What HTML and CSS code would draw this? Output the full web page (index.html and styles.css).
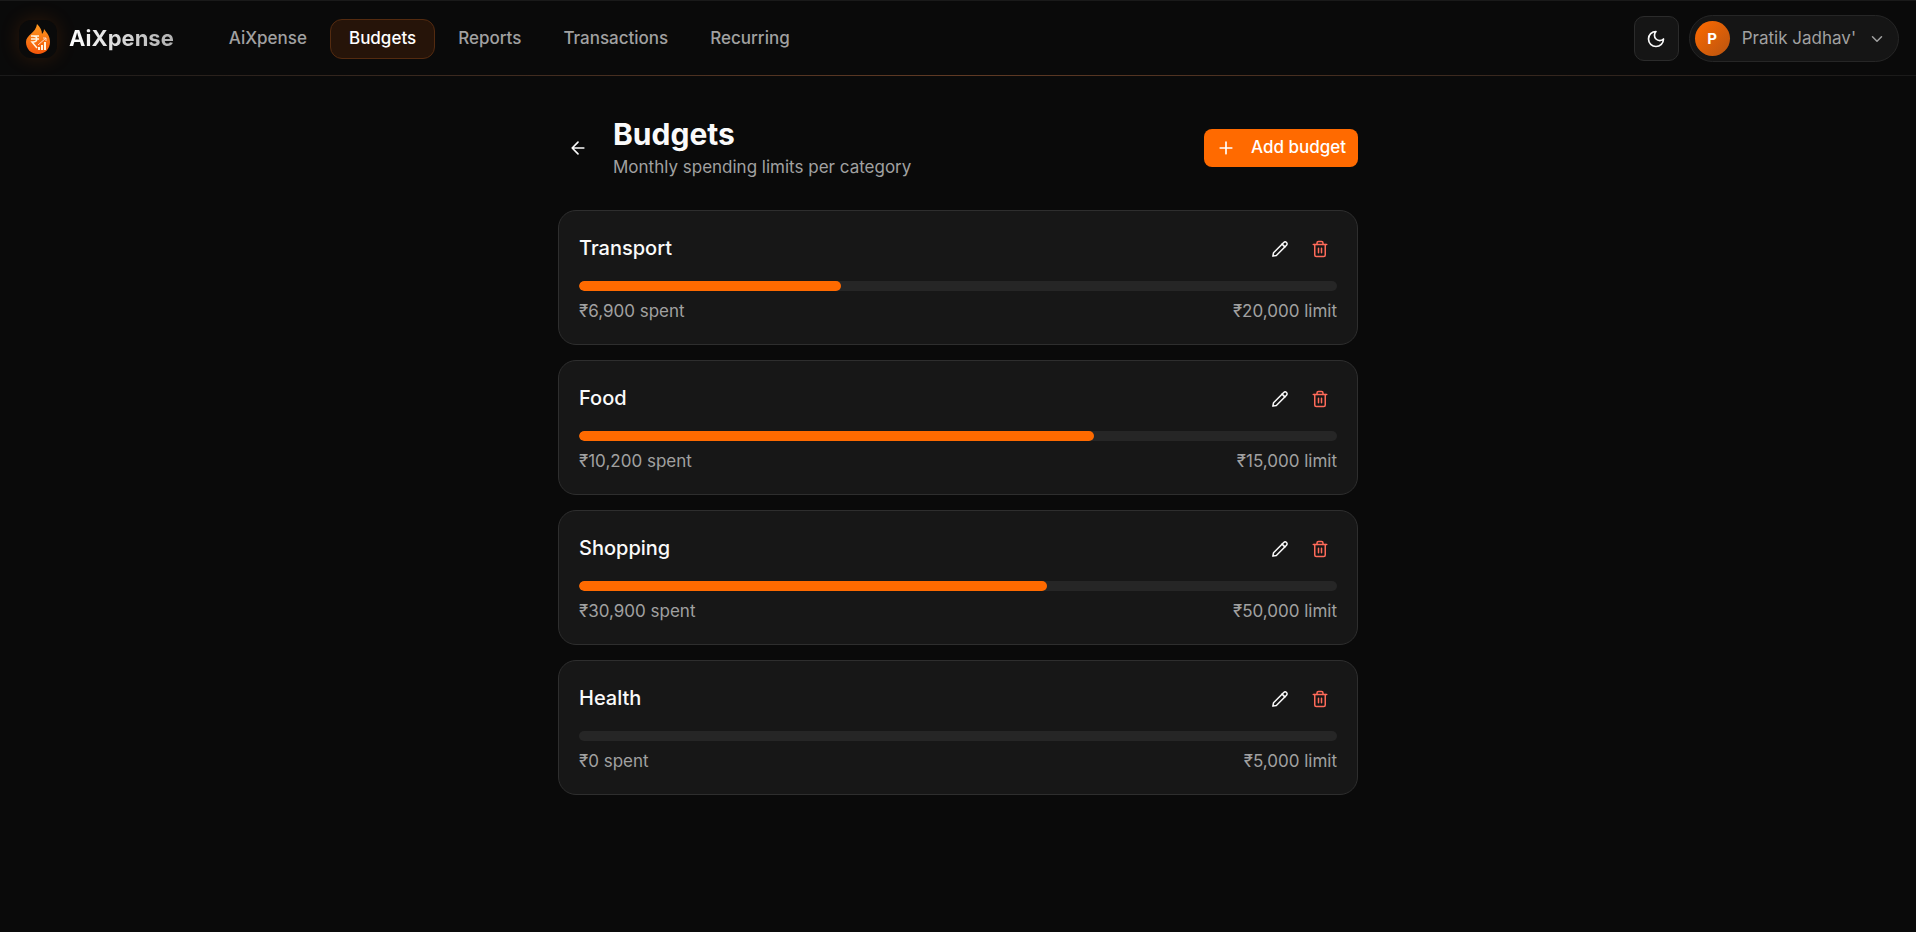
FILE: index.html
```html
<!DOCTYPE html>
<html lang="en">
<head>
    <meta charset="UTF-8">
    <meta name="viewport" content="width=device-width, initial-scale=1.0">
    <title>Budgets - AiXpense</title>
    <link rel="stylesheet" href="styles.css">
</head>
<body>
    <!-- Shared icons -->
    <svg class="sprite" aria-hidden="true">
        <symbol id="icon-pencil" viewBox="0 0 24 24">
            <path d="M2.5 21.5l.9-4.6L17 3.3a2.6 2.6 0 0 1 3.7 3.7L7.1 20.6z"/>
            <path d="m14.8 5.5 3.7 3.7"/>
        </symbol>
        <symbol id="icon-trash" viewBox="0 0 24 24">
            <path d="M3 6h18"/>
            <path d="M19 6v14a2 2 0 0 1-2 2H7a2 2 0 0 1-2-2V6"/>
            <path d="M8 6V4a2 2 0 0 1 2-2h4a2 2 0 0 1 2 2v2"/>
            <path d="M10 11v6M14 11v6"/>
        </symbol>
    </svg>

    <header class="topbar">
        <a class="brand" href="#">
            <span class="brand-logo">
                <svg viewBox="0 0 26 30" width="26" height="30" aria-hidden="true">
                    <defs>
                        <linearGradient id="flame" x1="0" y1="0" x2="0" y2="1">
                            <stop offset="0" stop-color="#ff9a1f"/>
                            <stop offset="1" stop-color="#f4560a"/>
                        </linearGradient>
                    </defs>
                    <path fill="url(#flame)" d="M12 0c3 3 5 6 5 10 1-1 2-3 2-5 3 4 6 7 6 13 0 7-5 12-12 12S1 25 1 18C1 11 11 9 12 0z"/>
                    <path fill="none" stroke="#fff3dd" stroke-width="1.5" d="M6 12h8M6 15h8M6 12h2c5 0 5 6 0 6H7l5 6"/>
                    <path fill="#fff3dd" d="M13 23h2v3h-2zM16 21h2v5h-2zM19 18h2v8h-2z"/>
                    <path fill="none" stroke="#ffd9c4" d="M13 21l8-7M18 14h3v3"/>
                </svg>
            </span>
            <span class="brand-name">AiXpense</span>
        </a>

        <nav class="nav">
            <a class="nav-link" href="#">AiXpense</a>
            <a class="nav-link active" href="#" aria-current="page">Budgets</a>
            <a class="nav-link" href="#">Reports</a>
            <a class="nav-link" href="#">Transactions</a>
            <a class="nav-link" href="#">Recurring</a>
        </nav>

        <div class="topbar-actions">
            <button class="theme-toggle" type="button" aria-label="Toggle theme">
                <svg class="icon icon-lg" viewBox="0 0 24 24"><path d="M12 3a6 6 0 0 0 9 9 9 9 0 1 1-9-9Z"/></svg>
            </button>
            <button class="user-menu" type="button">
                <span class="avatar">P</span>
                <span class="user-name">Pratik Jadhav'</span>
                <svg class="icon" viewBox="0 0 24 24"><path d="m6 9 6 6 6-6"/></svg>
            </button>
        </div>
    </header>

    <main class="page">
        <div class="page-header">
            <button class="icon-btn back-btn" type="button" aria-label="Back">
                <svg class="icon icon-lg" viewBox="0 0 24 24"><path d="m12 19-7-7 7-7M19 12H5"/></svg>
            </button>
            <div class="page-title">
                <h1>Budgets</h1>
                <p>Monthly spending limits per category</p>
            </div>
            <button class="add-btn" type="button">
                <svg class="icon icon-lg" viewBox="0 0 24 24"><path d="M5 12h14M12 5v14"/></svg>
                Add budget
            </button>
        </div>

        <div class="budget-list">
            <section class="budget-card">
                <div class="budget-top">
                    <h2>Transport</h2>
                    <button class="icon-btn" type="button" aria-label="Edit Transport"><svg class="icon"><use href="#icon-pencil"/></svg></button>
                    <button class="icon-btn delete" type="button" aria-label="Delete Transport"><svg class="icon"><use href="#icon-trash"/></svg></button>
                </div>
                <div class="progress"><div class="progress-fill" style="width: 34.5%"></div></div>
                <div class="budget-amounts">
                    <span>₹6,900 spent</span>
                    <span>₹20,000 limit</span>
                </div>
            </section>

            <section class="budget-card">
                <div class="budget-top">
                    <h2>Food</h2>
                    <button class="icon-btn" type="button" aria-label="Edit Food"><svg class="icon"><use href="#icon-pencil"/></svg></button>
                    <button class="icon-btn delete" type="button" aria-label="Delete Food"><svg class="icon"><use href="#icon-trash"/></svg></button>
                </div>
                <div class="progress"><div class="progress-fill" style="width: 68%"></div></div>
                <div class="budget-amounts">
                    <span>₹10,200 spent</span>
                    <span>₹15,000 limit</span>
                </div>
            </section>

            <section class="budget-card">
                <div class="budget-top">
                    <h2>Shopping</h2>
                    <button class="icon-btn" type="button" aria-label="Edit Shopping"><svg class="icon"><use href="#icon-pencil"/></svg></button>
                    <button class="icon-btn delete" type="button" aria-label="Delete Shopping"><svg class="icon"><use href="#icon-trash"/></svg></button>
                </div>
                <div class="progress"><div class="progress-fill" style="width: 61.8%"></div></div>
                <div class="budget-amounts">
                    <span>₹30,900 spent</span>
                    <span>₹50,000 limit</span>
                </div>
            </section>

            <section class="budget-card">
                <div class="budget-top">
                    <h2>Health</h2>
                    <button class="icon-btn" type="button" aria-label="Edit Health"><svg class="icon"><use href="#icon-pencil"/></svg></button>
                    <button class="icon-btn delete" type="button" aria-label="Delete Health"><svg class="icon"><use href="#icon-trash"/></svg></button>
                </div>
                <div class="progress"><div class="progress-fill" style="width: 0%"></div></div>
                <div class="budget-amounts">
                    <span>₹0 spent</span>
                    <span>₹5,000 limit</span>
                </div>
            </section>
        </div>
    </main>
</body>
</html>
```

FILE: styles.css
```css
* {
    box-sizing: border-box;
}

body {
    margin: 0;
    min-height: 100vh;
    background: #0a0a0a;
    color: #fafafa;
    font-family: Inter, "Liberation Sans", sans-serif;
    font-size: 17px;
    line-height: 25px;
}

button {
    font: inherit;
    color: inherit;
    background: none;
    border: none;
    padding: 0;
    cursor: pointer;
}

a {
    color: inherit;
    text-decoration: none;
}

h1, h2, p {
    margin: 0;
}

.sprite {
    display: none;
}

.icon {
    width: 18px;
    height: 18px;
    flex-shrink: 0;
    fill: none;
    stroke: currentColor;
    stroke-width: 2;
    stroke-linecap: round;
    stroke-linejoin: round;
}

.icon-lg {
    width: 20px;
    height: 20px;
}

/* Top bar */
.topbar {
    display: flex;
    align-items: center;
    height: 76px;
    padding: 0 17px 0 19px;
    border-top: 1px solid #1a1a1a;
    /* thin glow line along the bottom edge */
    background: linear-gradient(to right, #1a1a1a, #603a24 50%, #1a1a1a) bottom / 100% 1px no-repeat;
}

.brand {
    display: flex;
    align-items: center;
    gap: 12px;
}

.brand-logo {
    display: flex;
    align-items: center;
    justify-content: center;
    width: 38px;
    height: 38px;
    border-radius: 12px;
    background: #0a0a0a;
    box-shadow: 0 0 20px rgba(255, 106, 0, 0.15);
}

.brand-name {
    font-size: 22px;
    font-weight: 700;
    background: linear-gradient(to right, #fff, #b0b0b0);
    -webkit-background-clip: text;
    background-clip: text;
    color: transparent;
}

.nav {
    display: flex;
    gap: 4px;
    margin-left: 36px;
    font-weight: 500;
    color: #a1a1a1;
}

.nav-link {
    padding: 6px 18px 7px;
    border: 1px solid transparent;
    border-radius: 12px;
}

.nav-link.active {
    color: #fff;
    background: #261409;
    border-color: #542b10;
}

.topbar-actions {
    display: flex;
    align-items: center;
    gap: 10px;
    margin-left: auto;
}

.theme-toggle {
    display: flex;
    align-items: center;
    justify-content: center;
    width: 45px;
    height: 45px;
    border: 1px solid #2b2b2b;
    border-radius: 10px;
    background: #151515;
}

.user-menu {
    display: flex;
    align-items: center;
    gap: 12px;
    height: 47px;
    padding: 0 12px 0 5px;
    border: 1px solid #262626;
    border-radius: 24px;
    background: #151515;
    color: #a1a1a1;
}

.avatar {
    width: 35px;
    height: 35px;
    border-radius: 50%;
    background: linear-gradient(135deg, #ff6a00, #b85410);
    color: #fff;
    font-size: 15px;
    font-weight: 700;
    line-height: 35px;
    text-align: center;
}

/* Page */
.page {
    max-width: 840px;
    margin: 0 auto;
    padding: 39px 20px;
}

.page-header {
    display: flex;
    align-items: center;
    gap: 15px;
    margin-bottom: 30px;
}

.page-title {
    flex: 1;
}

.page-title h1 {
    margin-bottom: 2px;
    font-size: 30px;
    font-weight: 700;
    line-height: 38px;
}

.page-title p {
    color: #a1a1a1;
}

.icon-btn {
    display: flex;
    align-items: center;
    justify-content: center;
    width: 35px;
    height: 35px;
    border-radius: 8px;
}

.back-btn {
    width: 40px;
    height: 40px;
}

.add-btn {
    display: flex;
    align-items: center;
    gap: 15px;
    height: 38px;
    padding: 0 12px;
    border-radius: 8px;
    background: #ff6a00;
    color: #fff;
    font-weight: 500;
}

/* Budget cards */
.budget-list {
    display: flex;
    flex-direction: column;
    gap: 15px;
}

.budget-card {
    padding: 20px;
    border: 1px solid #2e2e2e;
    border-radius: 18px;
    background: #171717;
}

.budget-top {
    display: flex;
    align-items: center;
    gap: 5px;
    margin-bottom: 15px;
}

.budget-top h2 {
    flex: 1;
    font-size: 20px;
    font-weight: 500;
}

.delete {
    color: #ff6b5a;
}

.progress {
    height: 10px;
    margin-bottom: 8px;
    border-radius: 5px;
    background: #262626;
    overflow: hidden;
}

.progress-fill {
    height: 100%;
    border-radius: 5px;
    background: #ff6a00;
}

.budget-amounts {
    display: flex;
    justify-content: space-between;
    color: #a1a1a1;
}
```
